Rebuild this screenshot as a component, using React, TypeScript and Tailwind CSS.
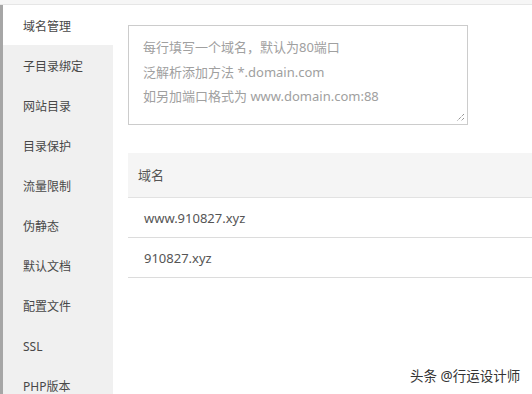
import React from "react";

const items = ["域名管理", "子目录绑定", "网站目录", "目录保护", "流量限制", "伪静态", "默认文档", "配置文件", "SSL", "PHP版本"];

export default function App() {
  return (
    <div
      className="w-[532px] h-[394px] overflow-hidden bg-white flex flex-col relative"
      style={{ fontFamily: '"Noto Sans", "Noto Sans CJK SC", sans-serif' }}
    >
      <div className="h-[5px] shrink-0 bg-[#f6f6f6] border-b border-[#e6e6e6]" />
      <div className="flex flex-1 min-h-0">
        <div className="w-[3px] shrink-0 bg-[#a6a6a6]" />
        <div className="w-[110px] shrink-0 bg-[#f0f0f0] flex flex-col">
          {items.map((t, i) => (
            <div
              key={t}
              className={`h-[40px] shrink-0 flex items-center pl-[20px] pt-[3px] text-[12px] text-[#484848] ${i === 0 ? "bg-white" : ""}`}
            >
              {t}
            </div>
          ))}
        </div>
        <div className="flex-1 min-w-0 pl-[15px] pt-[20px]">
          <div className="w-[340px] h-[100px] border border-[#cccccc] relative pl-[14px] pt-[9px] text-[13px] leading-[24.5px] text-[#a0a0a0]">
            <div>每行填写一个域名，默认为80端口</div>
            <div>泛解析添加方法 *.domain.com</div>
            <div>如另加端口格式为 www.domain.com:88</div>
            <svg className="absolute right-[2px] bottom-[2px]" width="9" height="9" viewBox="0 0 9 9">
              <line x1="8" y1="1" x2="1" y2="8" stroke="#666" strokeWidth="1" strokeDasharray="1 1" />
              <line x1="8" y1="5" x2="5" y2="8" stroke="#666" strokeWidth="1" strokeDasharray="1 1" />
            </svg>
          </div>
          <div className="mt-[28px] w-[420px]">
            <div className="h-[45px] bg-[#f5f5f5] border-b border-[#e2e2e2] flex items-center pl-[10px] pt-[2px] text-[13px] text-[#555]">
              域名
            </div>
            <div className="h-[40px] border-b border-[#dcdcdc] flex items-center pl-[16px] pt-[3px] text-[13px] text-[#555]">
              www.910827.xyz
            </div>
            <div className="h-[40px] border-b border-[#dcdcdc] flex items-center pl-[16px] pt-[2px] text-[13px] text-[#555]">
              910827.xyz
            </div>
          </div>
        </div>
      </div>
      <div className="absolute left-[410px] top-[366px] text-[13.5px] text-[#333] whitespace-nowrap">
        头条 @行运设计师
      </div>
    </div>
  );
}
